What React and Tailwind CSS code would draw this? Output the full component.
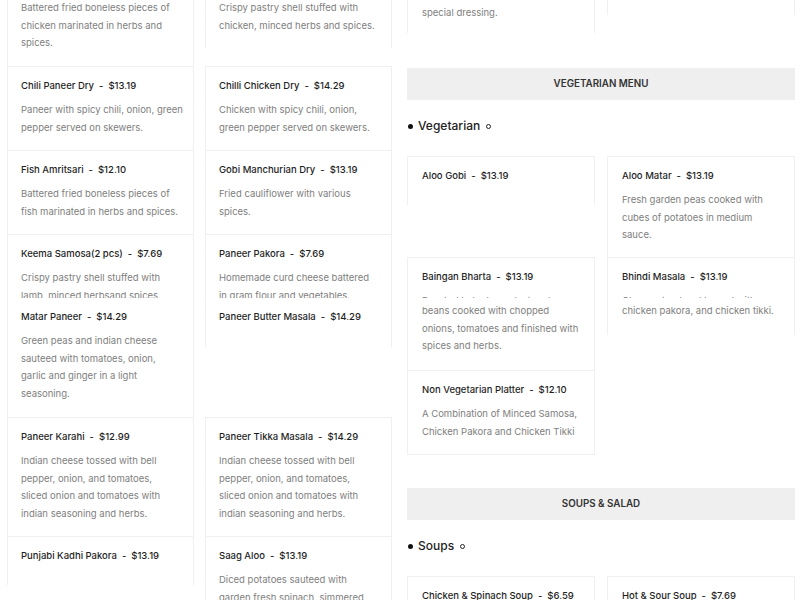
import React from "react";

function Title({ name, price }) {
  return (
    <div className="leading-[18px] text-[9.5px] font-medium text-[#1f1f1f] whitespace-nowrap">
      {name}
      <span className="px-[5px]">-</span>
      {price}
    </div>
  );
}

function Desc({ lines, clipFirst }) {
  if (!lines || lines.length === 0) return null;
  if (clipFirst) {
    return (
      <div className="mt-[6px] text-[9.5px] leading-[17.5px] text-[#808080] whitespace-nowrap">
        <div className="h-[6px] overflow-hidden">{lines[0]}</div>
        <div className="mt-[4px]">
          {lines.slice(1).map((l, i) => (
            <div key={i}>{l}</div>
          ))}
        </div>
      </div>
    );
  }
  return (
    <div className="mt-[6px] text-[9.5px] leading-[17.5px] text-[#808080] whitespace-nowrap">
      {lines.map((l, i) => (
        <div key={i}>{l}</div>
      ))}
    </div>
  );
}

function Card({ cls, name, price, lines, clipFirst, right }) {
  return (
    <div
      className={
        "overflow-hidden bg-white border-[#f0f0f0] pt-[10px] " +
        (right ? "px-[14px] " : "px-[13px] ") +
        cls
      }
    >
      <Title name={name} price={price} />
      <Desc lines={lines} clipFirst={clipFirst} />
    </div>
  );
}

function SectionBar({ label }) {
  return (
    <div className="h-[32px] bg-[#efefef] flex items-center justify-center text-[9.8px] font-semibold text-[#333]">
      {label}
    </div>
  );
}

function SubHeading({ label }) {
  return (
    <div className="h-[16px] flex items-center text-[12px] font-medium text-[#222] leading-[16px]">
      <span className="ml-[1px] w-[5px] h-[5px] rounded-full bg-[#111]" />
      <span className="ml-[5px]">{label}</span>
      <span className="ml-[6px] w-[5px] h-[5px] rounded-full border border-[#222]" />
    </div>
  );
}

const karahi = [
  "Indian cheese tossed with bell",
  "pepper, onion, and tomatoes,",
  "sliced onion and tomatoes with",
  "indian seasoning and herbs.",
];

export default function App() {
  return (
    <div className="w-[800px] h-[600px] overflow-hidden bg-white font-['Inter',sans-serif]">
      <div className="flex pl-[7px] gap-[15px]">
        {/* Left column */}
        <div className="w-[385px] shrink-0 grid grid-cols-2 gap-x-[11px] items-start -mt-[36px]">
          <div className="flex flex-col">
            <Card
              cls="h-[102px] border-x border-t"
              name="Chicken Pakora"
              price="$8.79"
              lines={[
                "Battered fried boneless pieces of",
                "chicken marinated in herbs and",
                "spices.",
              ]}
            />
            <Card
              cls="h-[84px] border-x border-t"
              name="Chili Paneer Dry"
              price="$13.19"
              lines={["Paneer with spicy chili, onion, green", "pepper served on skewers."]}
            />
            <Card
              cls="h-[84px] border-x border-t"
              name="Fish Amritsari"
              price="$12.10"
              lines={["Battered fried boneless pieces of", "fish marinated in herbs and spices."]}
            />
            <Card
              cls="h-[64px] border-x border-t"
              name="Keema Samosa(2 pcs)"
              price="$7.69"
              lines={["Crispy pastry shell stuffed with", "lamb, minced herbsand spices."]}
            />
            <Card
              cls="h-[119px] border-x"
              name="Matar Paneer"
              price="$14.29"
              lines={[
                "Green peas and indian cheese",
                "sauteed with tomatoes, onion,",
                "garlic and ginger in a light",
                "seasoning.",
              ]}
            />
            <Card cls="h-[119px] border-x border-t" name="Paneer Karahi" price="$12.99" lines={karahi} />
            <Card cls="h-[49px] border-x border-t" name="Punjabi Kadhi Pakora" price="$13.19" lines={[]} />
          </div>
          <div className="flex flex-col">
            <Card
              cls="h-[84px] border-x border-t"
              name="Chicken Samosa(2 pcs)"
              price="$6.59"
              lines={["Crispy pastry shell stuffed with", "chicken, minced herbs and spices."]}
            />
            <Card
              cls="mt-[18px] h-[84px] border-x border-t"
              name="Chilli Chicken Dry"
              price="$14.29"
              lines={["Chicken with spicy chili, onion,", "green pepper served on skewers."]}
            />
            <Card
              cls="h-[84px] border-x border-t"
              name="Gobi Manchurian Dry"
              price="$13.19"
              lines={["Fried cauliflower with various", "spices."]}
            />
            <Card
              cls="h-[64px] border-x border-t"
              name="Paneer Pakora"
              price="$7.69"
              lines={["Homemade curd cheese battered", "in gram flour and vegetables."]}
            />
            <Card cls="h-[49px] border-x" name="Paneer Butter Masala" price="$14.29" lines={[]} />
            <Card
              cls="mt-[70px] h-[119px] border-x border-t"
              name="Paneer Tikka Masala"
              price="$14.29"
              lines={karahi}
            />
            <Card
              cls="h-[90px] border-x border-t"
              name="Saag Aloo"
              price="$13.19"
              lines={[
                "Diced potatoes sauteed with",
                "garden fresh spinach, simmered",
                "with onions and spices.",
              ]}
            />
          </div>
        </div>

        {/* Right column */}
        <div className="w-[388px] shrink-0 flex flex-col -mt-[49px]">
          <div className="grid grid-cols-2 gap-x-[12px] items-start">
            <Card
              right
              cls="h-[82px] border-x border-t"
              name="House Salad"
              price="$6.59"
              lines={["Fresh lettuce and vegetables with", "special dressing."]}
            />
            <Card right cls="h-[64px] border-x border-t" name="Garden Salad" price="$6.59" lines={[]} />
          </div>

          <div className="mt-[35px]">
            <SectionBar label="VEGETARIAN MENU" />
          </div>
          <div className="mt-[18px]">
            <SubHeading label="Vegetarian" />
          </div>

          <div className="mt-[22px] grid grid-cols-2 gap-x-[12px] items-start">
            <div className="flex flex-col">
              <Card right cls="h-[49px] border-x border-t" name="Aloo Gobi" price="$13.19" lines={[]} />
              <Card
                right
                clipFirst
                cls="mt-[52px] h-[113px] border-x border-t"
                name="Baingan Bharta"
                price="$13.19"
                lines={[
                  "Roasted baked eggplant and green",
                  "beans cooked with chopped",
                  "onions, tomatoes and finished with",
                  "spices and herbs.",
                ]}
              />
              <Card
                right
                cls="h-[85px] border border-[#f0f0f0]"
                name="Non Vegetarian Platter"
                price="$12.10"
                lines={["A Combination of Minced Samosa,", "Chicken Pakora and Chicken Tikki"]}
              />
            </div>
            <div className="flex flex-col">
              <Card
                right
                cls="h-[101px] border-x border-t"
                name="Aloo Matar"
                price="$13.19"
                lines={[
                  "Fresh garden peas cooked with",
                  "cubes of potatoes in medium",
                  "sauce.",
                ]}
              />
              <Card
                right
                clipFirst
                cls="h-[78px] border-x border-t"
                name="Bhindi Masala"
                price="$13.19"
                lines={["Okra sauteed and tossed with", "chicken pakora, and chicken tikki."]}
              />
            </div>
          </div>

          <div className="mt-[33px]">
            <SectionBar label="SOUPS & SALAD" />
          </div>
          <div className="mt-[18px]">
            <SubHeading label="Soups" />
          </div>

          <div className="mt-[22px] grid grid-cols-2 gap-x-[12px] items-start">
            <Card
              right
              cls="h-[90px] border-x border-t"
              name="Chicken & Spinach Soup"
              price="$6.59"
              lines={["Chicken broth with fresh spinach", "and spices."]}
            />
            <Card
              right
              cls="h-[90px] border-x border-t"
              name="Hot & Sour Soup"
              price="$7.69"
              lines={["Spicy and tangy soup with", "vegetables."]}
            />
          </div>
        </div>
      </div>
    </div>
  );
}
